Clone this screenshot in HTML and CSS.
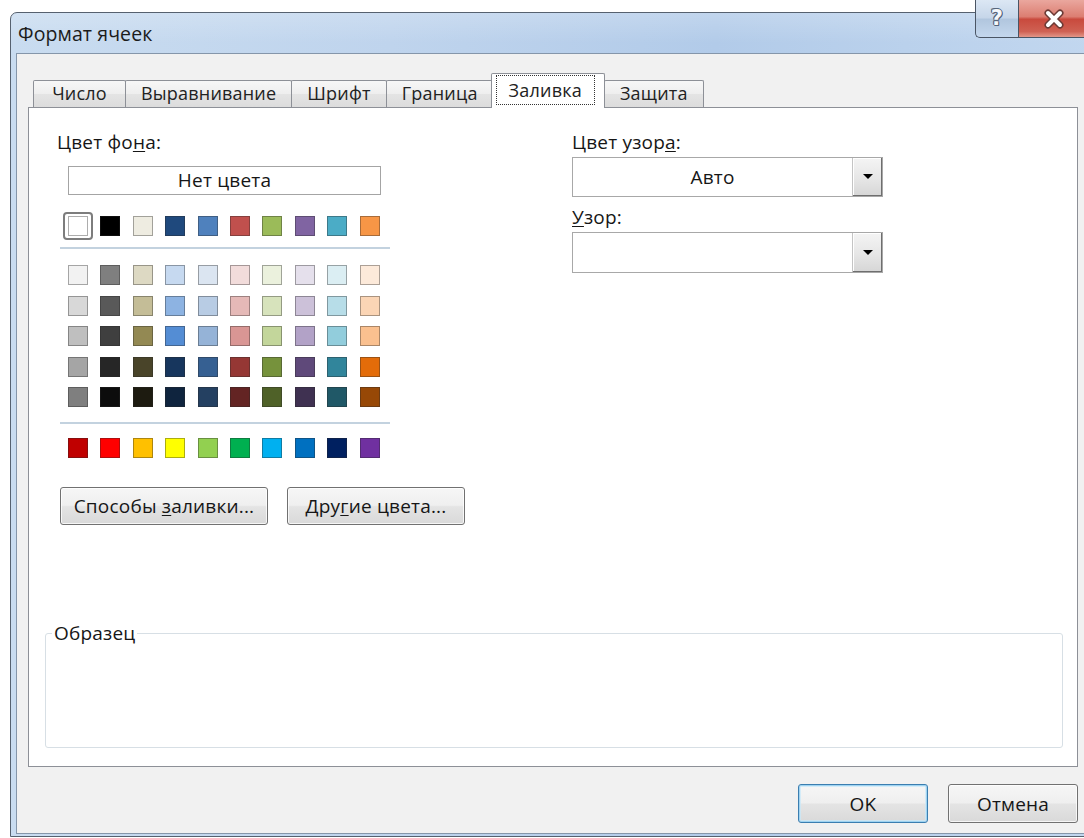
FILE: index.html
```html
<!DOCTYPE html>
<html lang="ru">
<head>
<meta charset="utf-8">
<title>Формат ячеек</title>
<link rel="stylesheet" href="styles.css">
</head>
<body>
<div class="window">
  <div class="titlebar">
    <span class="title">Формат ячеек</span>
    <div class="caption-buttons">
      <button class="cap cap-help" aria-label="Справка"><span class="cap-q">?</span></button>
      <button class="cap cap-close" aria-label="Закрыть">
        <svg width="26" height="22" viewBox="0 0 26 22" aria-hidden="true">
          <path d="M7 5 L19 17 M19 5 L7 17" stroke="#6b3a35" stroke-width="7" stroke-linecap="round"/>
          <path d="M7 5 L19 17 M19 5 L7 17" stroke="#ffffff" stroke-width="4" stroke-linecap="round"/>
        </svg>
      </button>
    </div>
  </div>

  <div class="client">
    <div class="tabs">
      <div class="tab">Число</div>
      <div class="tab">Выравнивание</div>
      <div class="tab">Шрифт</div>
      <div class="tab">Граница</div>
      <div class="tab active"><span class="focus">Заливка</span></div>
      <div class="tab">Защита</div>
    </div>

    <div class="panel">
      <div class="columns">
        <div class="col-left">
          <div class="label">Цвет фо<u>н</u>а:</div>
          <button class="no-color">Нет цвета</button>

          <div class="swatches row-main">
            <span class="sw selected" style="--c:#ffffff"></span>
            <span class="sw" style="--c:#000000"></span>
            <span class="sw" style="--c:#eeece1"></span>
            <span class="sw" style="--c:#1f497d"></span>
            <span class="sw" style="--c:#4f81bd"></span>
            <span class="sw" style="--c:#c0504d"></span>
            <span class="sw" style="--c:#9bbb59"></span>
            <span class="sw" style="--c:#8064a2"></span>
            <span class="sw" style="--c:#4bacc6"></span>
            <span class="sw" style="--c:#f79646"></span>
          </div>
          <div class="sep"></div>

          <div class="swatches shades">
            <span class="sw" style="--c:#f2f2f2"></span>
            <span class="sw" style="--c:#7f7f7f"></span>
            <span class="sw" style="--c:#ddd9c3"></span>
            <span class="sw" style="--c:#c6d9f0"></span>
            <span class="sw" style="--c:#dbe5f1"></span>
            <span class="sw" style="--c:#f2dcdb"></span>
            <span class="sw" style="--c:#ebf1dd"></span>
            <span class="sw" style="--c:#e5e0ec"></span>
            <span class="sw" style="--c:#dbeef3"></span>
            <span class="sw" style="--c:#fdeada"></span>

            <span class="sw" style="--c:#d8d8d8"></span>
            <span class="sw" style="--c:#595959"></span>
            <span class="sw" style="--c:#c4bd97"></span>
            <span class="sw" style="--c:#8db3e2"></span>
            <span class="sw" style="--c:#b8cce4"></span>
            <span class="sw" style="--c:#e5b9b7"></span>
            <span class="sw" style="--c:#d7e3bc"></span>
            <span class="sw" style="--c:#ccc1d9"></span>
            <span class="sw" style="--c:#b7dde8"></span>
            <span class="sw" style="--c:#fbd5b5"></span>

            <span class="sw" style="--c:#bfbfbf"></span>
            <span class="sw" style="--c:#3f3f3f"></span>
            <span class="sw" style="--c:#938953"></span>
            <span class="sw" style="--c:#548dd4"></span>
            <span class="sw" style="--c:#95b3d7"></span>
            <span class="sw" style="--c:#d99694"></span>
            <span class="sw" style="--c:#c3d69b"></span>
            <span class="sw" style="--c:#b2a2c7"></span>
            <span class="sw" style="--c:#92cddc"></span>
            <span class="sw" style="--c:#fac08f"></span>

            <span class="sw" style="--c:#a5a5a5"></span>
            <span class="sw" style="--c:#262626"></span>
            <span class="sw" style="--c:#494429"></span>
            <span class="sw" style="--c:#17365d"></span>
            <span class="sw" style="--c:#366092"></span>
            <span class="sw" style="--c:#953734"></span>
            <span class="sw" style="--c:#76923c"></span>
            <span class="sw" style="--c:#5f497a"></span>
            <span class="sw" style="--c:#31859b"></span>
            <span class="sw" style="--c:#e36c09"></span>

            <span class="sw" style="--c:#7f7f7f"></span>
            <span class="sw" style="--c:#0c0c0c"></span>
            <span class="sw" style="--c:#1d1b10"></span>
            <span class="sw" style="--c:#0f243e"></span>
            <span class="sw" style="--c:#244061"></span>
            <span class="sw" style="--c:#632423"></span>
            <span class="sw" style="--c:#4f6128"></span>
            <span class="sw" style="--c:#3f3151"></span>
            <span class="sw" style="--c:#205867"></span>
            <span class="sw" style="--c:#974806"></span>
          </div>
          <div class="sep sep-lower"></div>

          <div class="swatches row-std">
            <span class="sw" style="--c:#c00000"></span>
            <span class="sw" style="--c:#ff0000"></span>
            <span class="sw" style="--c:#ffc000"></span>
            <span class="sw" style="--c:#ffff00"></span>
            <span class="sw" style="--c:#92d050"></span>
            <span class="sw" style="--c:#00b050"></span>
            <span class="sw" style="--c:#00b0f0"></span>
            <span class="sw" style="--c:#0070c0"></span>
            <span class="sw" style="--c:#002060"></span>
            <span class="sw" style="--c:#7030a0"></span>
          </div>

          <div class="btn-row">
            <button class="btn btn-fill">Способы <u>з</u>аливки...</button>
            <button class="btn btn-more">Дру<u>г</u>ие цвета...</button>
          </div>
        </div>

        <div class="col-right">
          <div class="label">Цвет узор<u>а</u>:</div>
          <div class="combo">
            <span class="combo-value">Авто</span>
            <span class="combo-arrow"></span>
          </div>
          <div class="label label-gap"><u>У</u>зор:</div>
          <div class="combo combo-pattern">
            <span class="combo-value"></span>
            <span class="combo-arrow"></span>
          </div>
        </div>
      </div>

      <fieldset class="sample">
        <legend>Образец</legend>
      </fieldset>
    </div>

    <div class="footer">
      <button class="btn btn-dialog btn-default">OK</button>
      <button class="btn btn-dialog">Отмена</button>
    </div>
  </div>
</div>
</body>
</html>
```

FILE: styles.css
```css
* {
  box-sizing: border-box;
}

html,
body {
  margin: 0;
  height: 100%;
  overflow: hidden;
  background: #ffffff;
}

body {
  font-family: "Open Sans", "Noto Sans", "DejaVu Sans", sans-serif;
  font-size: 19px;
  letter-spacing: 0.2px;
  color: #161616;
}

button {
  font: inherit;
  letter-spacing: inherit;
  color: inherit;
  margin: 0;
}

u {
  text-underline-offset: 2px;
}

/* ---------- window frame ---------- */

.window {
  position: relative;
  margin: 12px 0 0 10px;
  width: 1086px;
  height: 825px;
  border: 1px solid #56616f;
  border-radius: 7px 7px 0 0;
  padding: 0 5px 2px;
  display: flex;
  flex-direction: column;
  background:
    linear-gradient(rgba(255, 255, 255, 0.2), rgba(255, 255, 255, 0) 30px),
    linear-gradient(to right, #c9dcf0, #bfd4ed 35%, #b2cbe9 65%, #c2d7ef);
}

.titlebar {
  height: 40px;
  display: flex;
  align-items: center;
  padding-left: 2px;
}

.title {
  font-size: 19.5px;
  letter-spacing: 0.1px;
  color: #1b1b1b;
}

.caption-buttons {
  position: absolute;
  top: -13px;
  left: 964px;
  display: flex;
}

.cap {
  height: 38px;
  padding: 0;
  border: 1px solid #4a5564;
  border-top: none;
  display: flex;
  align-items: center;
  justify-content: center;
}

.cap-help {
  width: 43px;
  border-right: none;
  border-radius: 0 0 0 5px;
  background: linear-gradient(#dce7f4, #c6d6e9 48%, #b1c6de 52%, #c4d7ed);
}

.cap-q {
  font-family: "DejaVu Sans", sans-serif;
  font-weight: bold;
  font-size: 21px;
  line-height: 1;
  color: #f4f7fb;
  text-shadow:
    1px 0 0 #56657a, -1px 0 0 #56657a,
    0 1px 0 #56657a, 0 -1px 0 #56657a,
    1px 1px 0 #56657a, -1px -1px 0 #56657a;
}

.cap-close {
  width: 72px;
  border-radius: 0 0 5px 0;
  background: linear-gradient(#eaa79e, #dc7e72 45%, #c94a3d 52%, #cf6153 85%, #e29688);
}

/* ---------- client area ---------- */

.client {
  flex: 1;
  background: #f1f1f1;
  border: 1px solid #8596aa;
  padding: 19px 11px 0;
  display: flex;
  flex-direction: column;
}

.tabs {
  display: flex;
  align-items: flex-end;
  height: 35px;
  padding-left: 5px;
  margin-bottom: -1px;
  position: relative;
  z-index: 1;
}

.tab {
  min-width: 93px;
  height: 27px;
  margin-bottom: 1px;
  margin-right: -1px;
  padding: 0 15px;
  border: 1px solid #8d9097;
  border-bottom: none;
  border-radius: 2px 2px 0 0;
  background: linear-gradient(#f7f7f7, #eeeeee 50%, #e4e4e4 50%, #dcdcdc);
  font-size: 18px;
  line-height: 25px;
  text-align: center;
  color: #222;
}

.tab.active {
  position: relative;
  z-index: 2;
  height: 35px;
  margin: 0 -1px 0 -2px;
  padding: 1px 9px 0 4px;
  background: #ffffff;
}

.focus {
  display: block;
  border: 1px dotted #333;
  padding: 0 12px;
  line-height: 28px;
}

/* ---------- tab page ---------- */

.panel {
  height: 660px;
  background: #ffffff;
  border: 1px solid #8d9097;
  padding: 24px 14px 18px 16px;
  display: flex;
  flex-direction: column;
}

.columns {
  display: flex;
  padding-left: 12px;
}

.label {
  line-height: 20px;
  white-space: nowrap;
}

.col-left {
  width: 420px;
  display: flex;
  flex-direction: column;
  align-items: flex-start;
}

.no-color {
  margin: 14px 0 0 11px;
  width: 313px;
  height: 29px;
  padding: 0;
  border: 1px solid #a4a4a4;
  background: #ffffff;
  line-height: 27px;
}

.swatches {
  display: grid;
  grid-template-columns: repeat(10, 20px);
  column-gap: 12.4px;
  margin-left: 11px;
}

.row-main {
  margin-top: 21px;
}

.shades {
  margin-top: 16px;
  row-gap: 10.5px;
}

.row-std {
  margin-top: 14px;
}

.sw {
  display: block;
  width: 20px;
  height: 20px;
  background: var(--c);
  box-shadow: inset 0 0 0 1px rgba(40, 40, 40, 0.38);
}

.sw.selected {
  position: relative;
}

.sw.selected::after {
  content: "";
  position: absolute;
  inset: -4px -5px;
  border: 2px solid #7d7d7d;
  border-radius: 4px;
}

.sep {
  width: 330px;
  height: 2px;
  margin: 11px 0 0 3px;
  background: #c3d2df;
}

.sep-lower {
  margin-top: 15px;
}

.btn-row {
  display: flex;
  gap: 19px;
  margin: 29px 0 0 3px;
}

.btn {
  height: 38px;
  padding: 0;
  border: 1px solid #717171;
  border-radius: 3px;
  background: linear-gradient(#f6f6f6, #efefef 48%, #e4e4e4 52%, #d9d9d9);
  box-shadow: inset 0 0 0 1px rgba(255, 255, 255, 0.75);
}

.btn-fill {
  width: 208px;
}

.btn-more {
  width: 178px;
}

.col-right {
  margin-left: 95px;
  width: 311px;
}

.combo {
  margin-top: 5px;
  height: 40px;
  display: flex;
  border: 1px solid #a8a8a8;
  background: #ffffff;
}

.combo-pattern {
  height: 41px;
}

.combo-value {
  flex: 1;
  text-align: center;
  line-height: 38px;
}

.combo-arrow {
  width: 30px;
  display: flex;
  align-items: center;
  justify-content: center;
  background: linear-gradient(#f4f4f4, #e6e6e6 55%, #d6d6d6);
  border-left: 1px solid #c4c4c4;
  box-shadow: inset -1px -1px 0 #6e6e6e, inset 1px 1px 0 #ffffff;
}

.combo-arrow::before {
  content: "";
  border-left: 5px solid transparent;
  border-right: 5px solid transparent;
  border-top: 5px solid #000000;
  margin-top: -1px;
}

.label-gap {
  margin-top: 10px;
}

/* ---------- sample group ---------- */

.sample {
  margin: auto 0 0;
  min-width: 0;
  height: 125px;
  padding: 0;
  border: 1px solid #d7dfe5;
  border-radius: 3px;
}

.sample legend {
  margin-left: 6px;
  padding: 0 2px;
  line-height: 20px;
}

/* ---------- dialog buttons ---------- */

.footer {
  display: flex;
  justify-content: flex-end;
  gap: 20px;
  padding-top: 17px;
}

.btn-dialog {
  width: 130px;
  height: 39px;
}

.btn-default {
  border-color: #3b7eb0;
  box-shadow: inset 0 0 0 1px #9fd3f1, inset 0 0 0 2px rgba(200, 232, 250, 0.7);
}
```
